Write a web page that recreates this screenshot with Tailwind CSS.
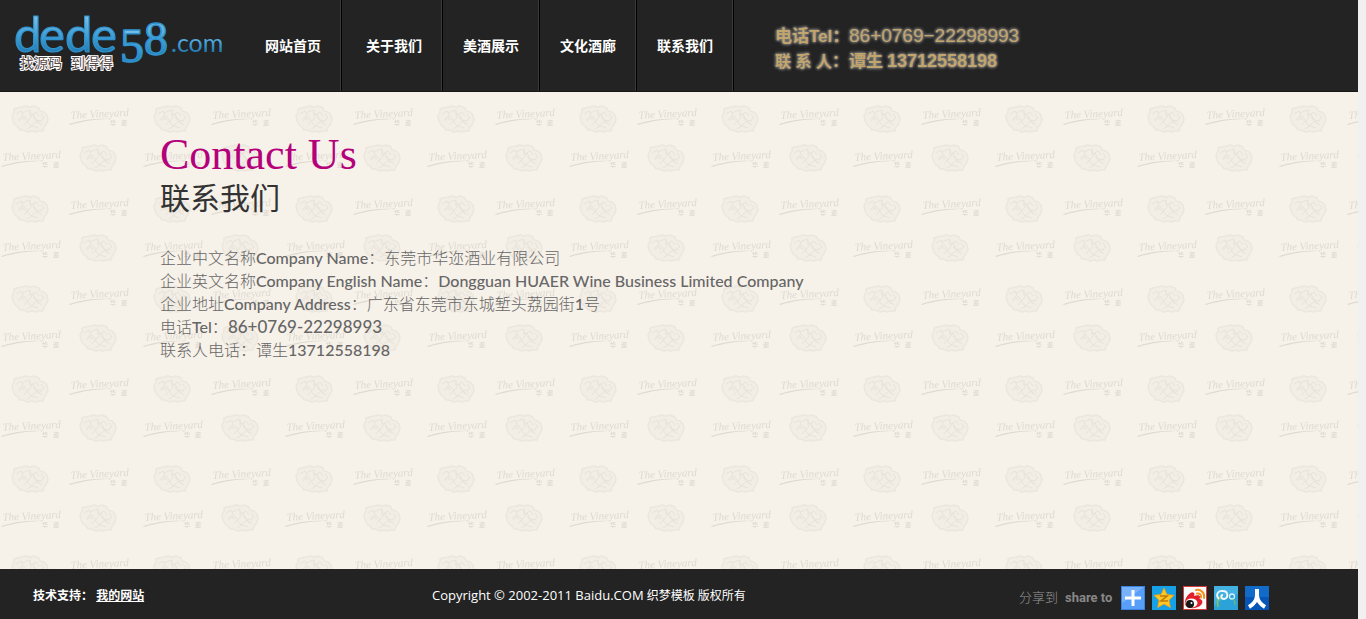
<!DOCTYPE html>
<html lang="zh-CN">
  <head>
    <meta charset="UTF-8" />
    <title>联系我们</title>
    <script src="https://cdn.jsdelivr.net/npm/@tailwindcss/browser@4"></script>
  </head>

  <body class="bg-[#f0f0f0] pr-2 font-['Open_Sans','Noto_Sans_CJK_SC',sans-serif]">
    <div class="flex flex-col min-h-screen">
      <header class="flex h-[92px] bg-[#232323] border-b border-[#1a1617]">
        <a href="#" class="w-[245px] shrink-0" aria-label="dede58.com">
          <svg width="245" height="91" viewBox="0 0 245 91">
            <defs>
              <linearGradient id="blue" x1="0" y1="0" x2="0" y2="1">
                <stop offset="0.2" stop-color="#7fc0e4" />
                <stop offset="0.55" stop-color="#3f9fd6" />
                <stop offset="0.85" stop-color="#2179b0" />
              </linearGradient>
            </defs>
            <g fill="url(#blue)" stroke="#2f93cf" stroke-linejoin="round">
              <g font-family="Lato, sans-serif" font-size="49" stroke-width="1.2">
                <text x="14" y="52">d</text>
                <text x="39" y="52">e</text>
                <text x="65" y="52">d</text>
                <text x="91" y="52">e</text>
              </g>
              <g font-family="'Liberation Serif', serif" font-size="48" stroke-width="1.5">
                <text x="120" y="62">5</text>
                <text x="144" y="55">8</text>
              </g>
              <text x="171" y="52" font-family="Lato, sans-serif" font-size="25" stroke="none">.com</text>
            </g>
            <g font-family="'Noto Sans CJK SC', sans-serif" font-size="14" fill="#5a4a4a" stroke="#fff" stroke-width="2" paint-order="stroke">
              <text x="20" y="68">找源码</text>
              <text x="71" y="68">到得得</text>
            </g>
          </svg>
        </a>
        <nav class="flex shrink-0 text-sm leading-[91px] font-bold text-white">
          <a href="#" class="px-5 mr-1 border-r border-black shadow-[inset_-1px_0_#3a3a3a]">网站首页</a>
          <a href="#" class="px-5 border-r border-black shadow-[inset_-1px_0_#3a3a3a]">关于我们</a>
          <a href="#" class="px-5 border-r border-black shadow-[inset_-1px_0_#3a3a3a]">美酒展示</a>
          <a href="#" class="px-5 border-r border-black shadow-[inset_-1px_0_#3a3a3a]">文化酒廊</a>
          <a href="#" class="px-5 border-r border-black shadow-[inset_-1px_0_#3a3a3a]">联系我们</a>
        </nav>
        <div class="pl-[41px] pt-6 whitespace-nowrap leading-6 font-bold text-[#c1a56c] font-['Liberation_Sans','Noto_Sans_CJK_SC',sans-serif] [text-shadow:0_0_2px_#777,0_0_3px_#777,0_0_3px_#777,0_0_4px_#666]">
          <p class="flex items-baseline">
            <span class="w-[74px] text-[17px]">电话Tel：</span>
            <span class="text-[19px] font-medium">86+0769−22298993</span>
          </p>
          <p class="flex items-baseline">
            <span class="w-[74px] text-base">联 系 人：</span>
            <span class="text-[17px]">谭生</span>
            <span class="pl-1 text-lg leading-6">13712558198</span>
          </p>
        </div>
      </header>

      <main class="relative flex-1 bg-[#f6f1e9] px-40 pt-10 pb-8">
        <!-- wallpaper -->
        <svg class="absolute inset-0 w-full h-full" aria-hidden="true">
          <defs>
            <g id="seal" fill="none" stroke="#ece7dd" stroke-linejoin="round">
              <path fill="#f2ede5" stroke-width="1.5" d="M9 2l4-1 4 1 4-1 5 2 1 3 4 1 3 3 1 5-2 5-2 2-1 4-4 0-4 1-3-1-4 1-5-2-3 0-2-3-3-2-2-4-1-5 2-4 0-3 3-1z" />
              <path stroke="#e8e3da" d="M3 9l5-3 2 4-5 5M9 8l7-3 2 5 5-3 3 4M6 16l5-5 4 5 5-7 3 6 6 1M11 20l3-4 4 5 6-5 5 4M8 13l4 2M17 5v6M20 12l6 7M14 24l5-3 6 2M28 9l3 4-3 2" />
            </g>
            <g id="script" fill="#dfdad1">
              <text x="1" y="12" transform="rotate(-3)" font-family="'Liberation Serif', serif" font-style="italic" font-size="11">The Vineyard</text>
              <path d="M0 17c14-5 28-6 44-5-16 0-30 2-43 6z" />
              <text x="41" y="18" font-family="'Noto Sans CJK SC', sans-serif" font-size="6" font-weight="bold">华</text>
              <text x="52" y="18" font-family="'Noto Sans CJK SC', sans-serif" font-size="6" font-weight="bold">迩</text>
            </g>
            <pattern id="wallpaper" width="142" height="90" patternUnits="userSpaceOnUse">
              <use href="#seal" x="13" y="13" />
              <use href="#script" x="69" y="15" />
              <use href="#script" x="1" y="57" />
              <use href="#seal" x="81" y="52" />
            </pattern>
          </defs>
          <rect width="100%" height="100%" fill="url(#wallpaper)" />
        </svg>

        <div class="relative">
          <h1 class="text-[44px] leading-[46px] text-[#b4007b] font-['Liberation_Serif',serif]">Contact Us</h1>
          <h2 class="text-3xl leading-9 text-[#333] font-['Noto_Sans_CJK_SC',sans-serif]">联系我们</h2>
          <div class="pt-8 text-base leading-[23px] font-light text-[#666] font-['Lato','Noto_Sans_CJK_SC',sans-serif]">
            <p>企业中文名称<span class="font-medium">Company Name</span>：东莞市华迩酒业有限公司</p>
            <p>企业英文名称<span class="font-medium">Company English Name</span>：<span class="font-medium">Dongguan HUAER Wine Business Limited Company</span></p>
            <p>企业地址<span class="font-medium">Company Address</span>：广东省东莞市东城堑头荔园街<span class="font-medium">1</span>号</p>
            <p>电话<span class="font-medium">Tel</span>：<span class="text-[17px] font-medium">86+0769-22298993</span></p>
            <p>联系人电话：谭生<span class="font-medium">13712558198</span></p>
          </div>
        </div>
      </main>

      <footer class="flex items-center h-[50px] bg-[#232323] text-xs text-white whitespace-nowrap">
        <p class="w-[432px] shrink-0 pl-[33px] pt-1 font-bold">技术支持： <a href="#" class="underline">我的网站</a></p>
        <p class="pt-1"><span class="text-[13px]">Copyright © 2002-2011 Baidu.COM</span> 织梦模板 版权所有</p>
        <div class="ml-auto mr-[89px] pt-2 flex items-center gap-[7px]">
          <span class="text-[13px] font-light text-[#999]">分享到</span>
          <span class="w-[49px] text-[13px] font-bold text-[#888] font-['Roboto',sans-serif]">share to</span>
          <a href="#" aria-label="更多">
            <svg width="24" height="24" viewBox="0 0 24 24">
              <rect width="24" height="24" fill="#579ff8" />
              <path d="M0 0h24L0 18z" fill="#77b2fb" />
              <path d="M12 4v16M4 12h16" stroke="#fff" stroke-width="3" />
              <rect x=".5" y=".5" width="23" height="23" fill="none" stroke="#3a83e0" />
            </svg>
          </a>
          <a href="#" aria-label="QQ空间">
            <svg width="24" height="24" viewBox="0 0 24 24">
              <rect width="24" height="24" fill="#16a0e8" />
              <path d="M12 2l3 6.500 7 .8-5 5 1.300 7.200L12 18l-6.300 3.500L7 14.300l-5-5 7-.8z" fill="#fdc726" stroke="#f3a010" stroke-width=".8" />
              <path d="M8 10h7l-6 5h7" fill="none" stroke="#c27b05" stroke-width="1.600" />
            </svg>
          </a>
          <a href="#" aria-label="新浪微博">
            <svg width="24" height="24" viewBox="0 0 24 24">
              <rect x=".5" y=".5" width="23" height="23" fill="#fafafa" stroke="#d93a3a" />
              <path d="M3 12c2-4 6-7 8-5 1 1 0 2 0 3 3-1 6-1 6 1 0 1-1 2 0 2 3 1 3 4 1 6-4 4-12 4-15 1-2-2-1-5 0-8z" fill="#e2202c" />
              <ellipse cx="8.500" cy="17" rx="6" ry="4.500" fill="#fff" />
              <circle cx="7" cy="18" r="4" fill="#151515" />
              <circle cx="8.500" cy="17" r="1" fill="#fff" />
              <path d="M13 4c5-1 9 3 8 8M14 7.500c3-.5 4.500 1.500 4 4" fill="none" stroke="#f5921e" stroke-width="2" stroke-linecap="round" />
            </svg>
          </a>
          <a href="#" aria-label="腾讯微博">
            <svg width="24" height="24" viewBox="0 0 24 24">
              <rect width="24" height="24" fill="#2ba3d9" />
              <path d="M0 0h24v8Q10 10 0 20z" fill="#43b2e2" />
              <path d="M4 21c-1-5 0-9 4-11" fill="none" stroke="#8bc34c" stroke-width="1.500" />
              <path d="M5 13c-4-4-1-9 4-8 5 0 6 7 1 8-3 0-4-4-1-4" fill="none" stroke="#f5fbfe" stroke-width="1.800" />
              <circle cx="18" cy="10.500" r="2.500" fill="none" stroke="#d6eefa" stroke-width="1.300" />
              <path d="M19 13c2 2 2 4 2 6" fill="none" stroke="#8bc34c" />
            </svg>
          </a>
          <a href="#" aria-label="人人网">
            <svg width="24" height="24" viewBox="0 0 24 24">
              <rect width="24" height="24" fill="#0656b8" />
              <path d="M0 0h24v11H0z" fill="#126ac9" />
              <path d="M12 3v7q-1 7-8 11M12 10q1 7 8 11" fill="none" stroke="#fff" stroke-width="4" />
            </svg>
          </a>
        </div>
      </footer>
    </div>
  </body>
</html>
